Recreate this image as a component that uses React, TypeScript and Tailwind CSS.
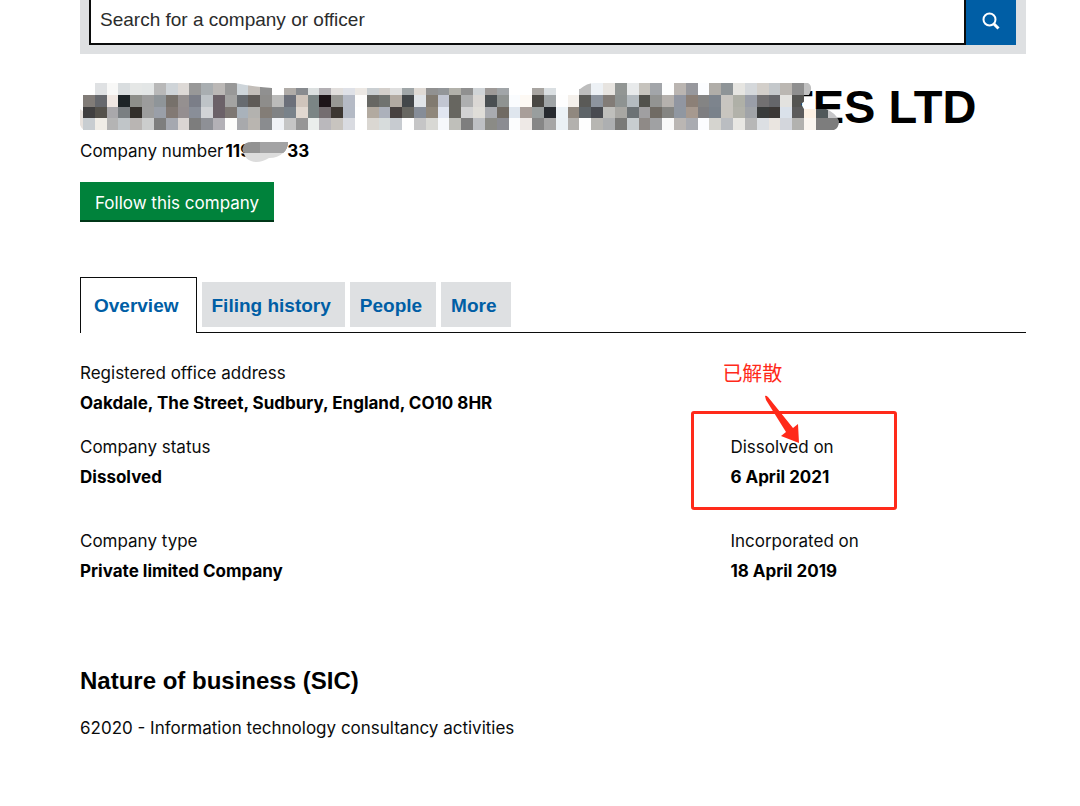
import type { ReactNode } from 'react';

// One string per mosaic row, 64 cells each, '-' leaves a cell empty
const MOSAIC_ROWS = [
  '- dfe1e3 f8f8f7 d9dddf e5e7e6 e3e6e6 b8b8b8 cfd4d8 ddd9d6 989898 a9aeb1 bbb8b6 989898 ced5da c3beb9 909090 - b0aca8 888b8f dce0e0 b3b0b4 e2dfdd dfe1e7 ece8e4 cacfd2 d3cfcb dfdfdf a0a6a8 dfdad5 919191 939699 b2b1aa 909090 d0d4d7 9e9a98 a1a5a8 - - a8a5a1 dadfe2 - - bdbdbd edf1f5 e7e4e0 929694 e8eaeb c6c3bd a2a5a9 fdfefe bab5b1 97989d fcfdff b0ada8 8e9497 e6e5e1 d5d8db d3cfca c4c8cb bbb7b2 8f8f8f c0c0c0 - -',
  '817c78 66686d eee6e1 1d2427 8e8f8a 9c9c9c 8f9599 77716b 959090 7b7e88 bec3c7 6b6168 a3a3a2 676b70 5f5b57 8e8d8b bbbbba 6c707a cec4bb 7b8585 1d1418 989894 b5bac5 fefdfc 676763 707370 b2aaa2 43474a e0e4e8 817a70 c2c6d2 676660 aeafb0 dad7d4 4a4f52 8f9391 fafcfe fdf9f4 4a4844 9fa4a6 fefefe f4f0eb 5a5a57 8d949e 827c77 8e9392 b4bbc0 51514c 939492 b5b1ad 9196a1 8c8077 848484 7d848d c8c5c0 afb0a7 9a9ea8 727071 65666a e3e2df 555552 - - -',
  '403f40 54514b a9a8ab 7a7f82 322e2a 9d9d9d 9a9fa8 827974 948e90 898e98 d1d3d6 6b6168 7d7773 a9b2bb b3b2af 837d77 808284 79828a e0d8d0 7b8585 746d70 3c3631 b4bac5 - b2aaa0 acb1bb 474140 686762 868d98 8f877b e1e6f1 676660 d2d2d3 dfddd8 a9abb0 706a63 dfe6ee a89e99 999e9e 272b30 ecf2f6 90887f 5e6468 484a50 bfbfbc a8a7a3 6c7275 a09fa1 706b64 858582 9097a1 a6998f 7e7e81 7a828b c8c5bf b2b2aa a1a4a8 393b3b 3c3836 dae1ea 5c5c5c fcf1e4 50585a c6c6c8',
  'c8cdd1 f0ede7 b4b4b4 c0c5c8 b9b5b3 cccdcd 7e7e7e a5a8b0 dad5d3 7d7d7d 8e9096 b3b1b6 fdfdfb a8a9ac b9b5b0 8a8c8f f0f2f6 c5c5c5 969696 eaeeec bab8bc c8c4bf d9dbe1 - dad7d2 d7dcdc c7cbd0 fefefe c5c5c6 d8d8d4 f6f8fb bfbfba 7e7e7e bec0c4 8b8b86 8b8c92 fcfdfe eee9e6 868686 a6a6a6 ebf1f5 b3b1ae fefefe b7b6b2 adafb1 7a7a78 c8cdd0 8f8a87 a0a1a3 f9f9f9 bab6b3 a9abb1 fcfdff d5d4cf babdc1 e8e7e3 b7b7b7 dcdfe3 eae5e0 d3d6dc b2b2af faf6f0 7d7d7d 7d7d7d',
].map((row) => row.split(' '));

const CELL_WIDTH = 11.82;
const CELL_HEIGHT = 11.8;

const TABS = ['Filing history', 'People', 'More'];

function NameMosaic() {
  return (
    <svg
      className="absolute top-0 left-0 h-[50px] w-[762px]"
      viewBox="0 0 762 50"
      aria-hidden="true"
    >
      <clipPath id="brush">
        <path d="M0 9L13 6V1H155Q175 5 192 6H488L500 7Q507 1 514 1H728Q733 4 730 11Q726 19 721 22L724 27H746Q756 31 759 39Q759 46 754 48H0Z" />
      </clipPath>
      <path d="M0 27L4 30V48Q-2 44 0 36Z" fill="#e8e2de" />
      <g clipPath="url(#brush)" shapeRendering="crispEdges">
        {MOSAIC_ROWS.map((row, y) =>
          row.map((color, x) =>
            color === '-' ? null : (
              <rect
                key={`${x}-${y}`}
                x={3 + x * CELL_WIDTH}
                y={1 + y * CELL_HEIGHT}
                width={CELL_WIDTH}
                height={CELL_HEIGHT}
                fill={`#${color}`}
              />
            ),
          ),
        )}
      </g>
    </svg>
  );
}

function Annotation() {
  return (
    <div className="pointer-events-none absolute -top-[21px] -left-[39px] h-[99px] w-[206px] rounded-[3px] border-3 border-[#ff2a1a]">
      <span className="absolute -top-14 left-7 font-['Noto_Sans_CJK_SC',sans-serif] text-[20px] leading-[30px] whitespace-nowrap text-[#ff2a1a]">
        已解散
      </span>
      <svg
        className="absolute -top-[19px] left-[70px] h-[52px] w-10"
        viewBox="0 0 40 52"
        fill="#ff2a1a"
        aria-hidden="true"
      >
        <path d="M1 1Q2 0 4 2L29 33L34 29L35 48L17 41L22 37L2 5Z" />
      </svg>
    </div>
  );
}

interface DetailProps {
  label: string;
  children: ReactNode;
  annotated?: boolean;
}

function Detail({ label, children, annotated }: DetailProps) {
  return (
    <dl className="relative">
      <dt>{label}</dt>
      <dd className="font-bold text-black">{children}</dd>
      {annotated && <Annotation />}
    </dl>
  );
}

export default function App() {
  return (
    <main className="bg-white pr-[54px] pb-16 pl-20 font-[Inter,sans-serif] text-[17px] leading-[30px] text-[#0b0c0c]">
      <form className="flex bg-[#dee0e2] pr-2.5 pb-[9px] pl-[9px]" onSubmit={(e) => e.preventDefault()}>
        <input
          type="search"
          aria-label="Search for a company or officer"
          placeholder="Search for a company or officer"
          className="h-[45px] min-w-0 flex-1 border-2 border-t-0 border-[#0b0c0c] bg-white px-[9px] pb-1 font-['Liberation_Sans',sans-serif] text-[19px] placeholder:text-[#2b2c2c]"
        />
        <button
          type="submit"
          aria-label="Search"
          className="flex h-[45px] w-[50px] items-center justify-center bg-[#005ea5] pb-1 text-white"
        >
          <svg className="h-5 w-5" viewBox="0 0 20 20" fill="none" stroke="currentColor" aria-hidden="true">
            <circle cx="8.5" cy="8.5" r="6" strokeWidth="2" />
            <path d="M13 13L17.5 17.5" strokeWidth="3" />
          </svg>
        </button>
      </form>

      <h1 className="relative mt-7 pl-[704px] font-['Liberation_Sans',sans-serif] text-[47px] leading-[50px] font-bold whitespace-nowrap text-black">
        TES LTD
        <NameMosaic />
      </h1>
      <p className="mt-1 flex gap-0.5">
        Company number
        <strong className="relative flex gap-9 text-black">
          <span>119</span>
          <span>33</span>
          <svg className="absolute top-[5px] left-[17px] h-[22px] w-[46px]" viewBox="0 0 46 22" aria-hidden="true">
            <path d="M1 6Q2 1 10 1H46Q46 8 41 12H3Q-1 10 1 6Z" fill="#929292" />
            <path d="M18 1H46Q46 8 41 12H18Z" fill="#a3a3a4" />
            <path d="M2 12H41Q36 17 27 17Q17 23 9 20Q3 18 2 12Z" fill="#dcdcdc" />
          </svg>
        </strong>
      </p>
      <button
        type="button"
        className="mt-4 flex h-10 items-center border-b-2 border-[#003618] bg-[#00823b] px-[15px] pt-1 text-white"
      >
        Follow this company
      </button>

      <nav className="mt-[55px] flex items-end gap-[5px] border-b border-[#0b0c0c] font-['Liberation_Sans',sans-serif] text-[19px] font-bold text-[#005ea5]">
        <a
          href="#overview"
          aria-current="page"
          className="-mb-px flex h-14 items-center border border-b-0 border-[#0b0c0c] bg-white pr-[17px] pl-[13px]"
        >
          Overview
        </a>
        {TABS.map((tab) => (
          <a key={tab} href="#tab" className="mb-[5px] flex h-[45px] items-center bg-[#dee0e2] pt-0.5 pr-[14px] pl-2.5">
            {tab}
          </a>
        ))}
      </nav>

      <section className="mt-[25px]">
        <Detail label="Registered office address">Oakdale, The Street, Sudbury, England, CO10 8HR</Detail>
        <div className="mt-3.5 grid grid-cols-[11fr_5fr] gap-y-[34px]">
          <Detail label="Company status">Dissolved</Detail>
          <Detail label="Dissolved on" annotated>
            6 April 2021
          </Detail>
          <Detail label="Company type">Private limited Company</Detail>
          <Detail label="Incorporated on">18 April 2019</Detail>
        </div>
      </section>

      <section className="mt-20">
        <h2 className="font-['Liberation_Sans',sans-serif] text-[24px] leading-[30px] font-bold text-black">
          Nature of business (SIC)
        </h2>
        <p className="mt-[17px]">62020 - Information technology consultancy activities</p>
      </section>
    </main>
  );
}
